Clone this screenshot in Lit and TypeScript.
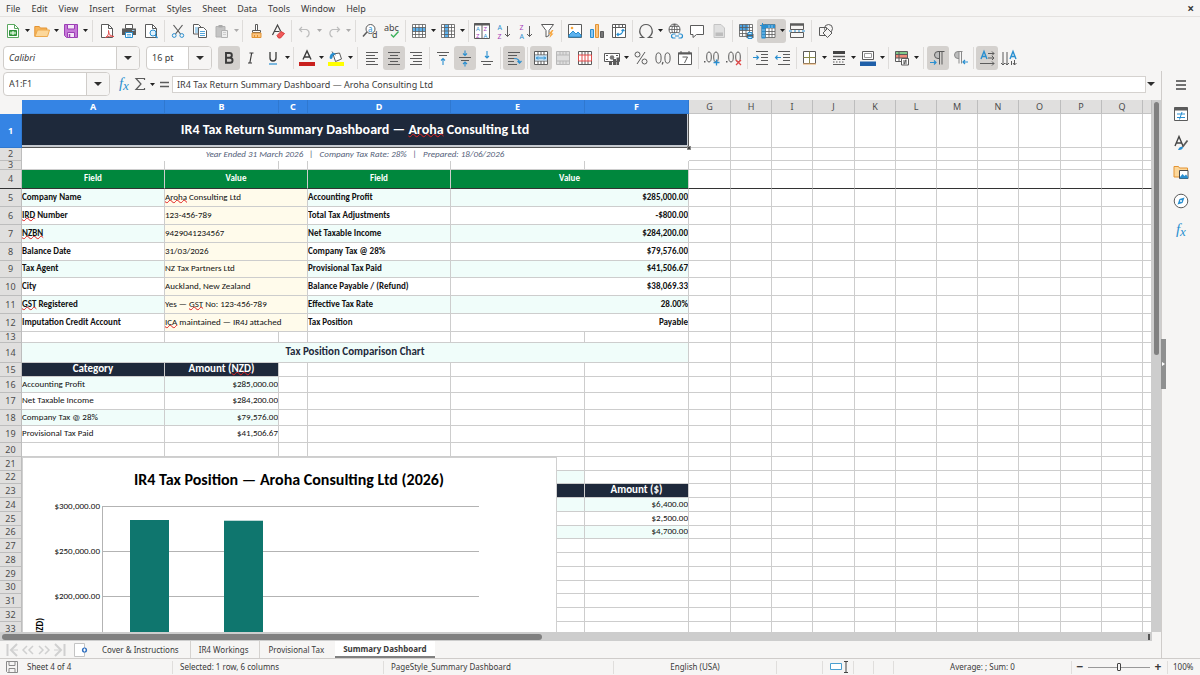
import { LitElement, html, css, svg, nothing, SVGTemplateResult } from "lit";
import { customElement, property } from "lit/decorators.js";
import { classMap } from "lit/directives/class-map.js";

const G = "#5b5b5b";
const B = "#2a8fd0";
const line = (d: string, c = G, w = 1) => svg`<path d=${d} fill="none" stroke=${c} stroke-width=${w} />`;
const fill = (d: string, c: string, s = "none") => svg`<path d=${d} fill=${c} stroke=${s} />`;
const glyph = (t: string, x: number, y: number, size: number, c = G, style = "") =>
  svg`<text x=${x} y=${y} font-size=${size} fill=${c} class=${"g " + style}>${t}</text>`;

const ICONS: Record<string, SVGTemplateResult[]> = {
  new: [fill("M2.5 1.5h7l4 4v9h-11z", "#fff", "#5aa860"), line("M9.5 1.5v4h4", "#5aa860"), fill("M4.5 7.5h7v5h-7z", "#4caf50", "#2e8b3a"), line("M5 10h6M8 8v4", "#fff")],
  open: [fill("M.8 13.5v-10h4.5l1 1.5h6.500v2", "#f7b55a", "#e39332"), fill("M1 13.500l2.500-6.500h12l-2 6.500z", "#fcd79a", "#eda94c")],
  save: [fill("M1.500 1.500h13v13h-11l-2-2z", "#c678d8", "#9c3fb5"), fill("M4.500 1.500h7v4.500h-7z", "#f4e6f8", "#9c3fb5"), fill("M4.500 9.500h7v5h-7z", "#f4e6f8", "#9c3fb5"), line("M6.500 11v3", "#9c3fb5", 1.500)],
  pdf: [fill("M2.500 1.500h7l4 4v9h-11z", "#fff", G), line("M9.500 1.500v4h4"), line("M6.500 14.500c3-2 3.500-4.500 3-7c0 4 2.500 6 5.500 6c-3-.8-6-.3-8.500 1z", "#e04a4a", 1)],
  print: [fill("M4.500 1.500h7v4h-7z", "#fff", G), fill("M1 5.500h14v6.500h-14z", "#5b5b5b"), line("M11 7.500h2.500", "#8fd0ff"), fill("M4.500 9.500h7v5h-7z", "#fff", B), line("M6 11.500h4M6 13h4", B, .7)],
  preview: [fill("M2.500 1.500h7l4 4v9h-11z", "#fff", G), line("M9.500 1.500v4h4"), svg`<circle cx="10" cy="10" r="3" fill="#dff1fd" stroke="#2a8fd0" />`, line("M12 12l2.500 3", B, 1.300)],
  cut: [line("M3.500 2L10.500 11M12.500 2L5.500 11", G, 1.200), svg`<circle cx="4.200" cy="12.500" r="1.900" fill="none" stroke="#2a8fd0" /><circle cx="11.800" cy="12.500" r="1.900" fill="none" stroke="#2a8fd0" />`],
  copy: [fill("M1.500 1.500h5l2.500 2.500v7h-7.500z", "#fff", G), line("M3 5h3M3 7h3M3 9h3", B, .8), fill("M6.500 4.500h5l3 3v7h-8z", "#fff", G), line("M8 8.500h5M8 10.500h5M8 12.500h5", B, .8)],
  paste: [fill("M2 3.500h9v10.500h-9z", "#c4c4c4", "#b2b2b2"), fill("M4.500 2h4v2.500h-4z", "#aaa"), fill("M7.500 7.500h6v7h-6z", "#eee", "#b2b2b2"), line("M9 9.500h3M9 11.500h3", "#c4c4c4", .8)],
  brush: [fill("M7.500 1.500h2v6h-2z", "#fff", G), fill("M4.500 7.500h8v2h-8z", "#fff", G), fill("M4 10h9v4.500h-9z", "#fbc582", "#e39332"), line("M6.500 14v-2M9.500 14v-2", "#e39332")],
  clear: [line("M2.500 12L7.500 2L10.800 8.500M4.500 8.500h5", "#444", 1.200), fill("M7 12.500l4-4 3.500 2-4 4.500h-2z", "#f05a5a", "#d83a3a")],
  undo: [line("M5 4L2.500 6.500L5 9M2.500 6.500h7a4 4 0 0 1 0 7.500", "#bdbdbd", 1.200)],
  redo: [line("M11 4l2.500 2.500L11 9M13.500 6.500h-7a4 4 0 0 0 0 7.500", "#bdbdbd", 1.200)],
  find: [svg`<circle cx="8.500" cy="6" r="4.500" fill="#fff" stroke="#5b5b5b" />`, line("M5 9L1 13.500", G, 1.500), glyph("a", 6, 8.500, 8, B), glyph("d", 10, 15, 9, "#444")],
  spell: [glyph("abc", 0, 8, 9, "#444"), line("M7 11.500l2.500 2.500 5-5.500", "#3cb15c", 1.400)],
  row: [fill("M1.500 1.500h13v13h-13z", "#fff"), fill("M1.500 4.500h13v4h-13z", "#5db2ee"), line("M1.500 1.500h13v13h-13zM1.500 4.500h13M1.500 8.500h13M1.500 11.500h13M4.500 1.500v13M8 1.500v13M11.500 1.500v13", G, .8)],
  col: [fill("M1.500 1.500h13v13h-13z", "#fff"), fill("M4.500 1.500h4v13h-4z", "#5db2ee"), line("M1.500 1.500h13v13h-13zM1.500 4.500h13M1.500 8h13M1.500 11.500h13M4.500 1.500v13M8.500 1.500v13M11.500 1.500v13", G, .8)],
  sort: [fill("M.5 .5h15v15h-15z", "#fff", G), line("M0 1.500h16", G, 2), line("M8 1v14"), glyph("A", 2, 8, 6, B), glyph("Z", 2, 15, 6, "#a640b8"), glyph("Z", 9.500, 8, 6, "#a640b8"), glyph("A", 9.500, 15, 6, B)],
  az: [glyph("A", 1.500, 6.500, 7, B), glyph("Z", 1.500, 15.500, 7, "#a640b8"), line("M11.500 3v10.500M9 11l2.500 2.500L14 11")],
  za: [glyph("Z", 1.500, 6.500, 7, "#a640b8"), glyph("A", 1.500, 15.500, 7, B), line("M11.500 3v10.500M9 11l2.500 2.500L14 11")],
  filter: [fill("M1.500 1.500h12l-4.500 6v5l-3 1.500v-6.500z", "#fff", G), fill("M12 7l-3.500 4h2l-1 4 4-4.500h-2l2-3.500z", "#f7a53c")],
  image: [fill("M1.500 1.500h13v13h-13z", "#fff", G), fill("M2 12l4-4 3 3 2-2 3 3v2h-12z", "#5db2ee", B), svg`<circle cx="5" cy="5" r="1.300" fill="#f7a53c" />`],
  chart: [fill("M1.500 6.500h3v8h-3z", "#8ac7f2", B), fill("M6.500 1.500h3v13h-3z", "#fbc582", "#e39332"), fill("M11.500 8.500h3v6h-3z", "#777", G)],
  pivot: [fill("M1.500 1.500h13v13h-13z", "#fff", G), line("M1.500 4.500h13M4.500 1.500v13M8 1.500v3M11.500 1.500v3"), line("M6 11.500c4 .5 6-1.500 6-5M10.500 8l1.500-1.500L13.500 8M7.500 10L6 11.500 7.500 13", B, 1.200)],
  omega: [line("M1.500 14.500h4c-7-5-3-13 2.500-13s9.500 8 2.500 13h4", G, 1.200)],
  link: [svg`<circle cx="7.500" cy="6.500" r="5.500" fill="#fff" stroke="#5b5b5b" />`, line("M2 6.500h11M3 3.500h9M3.500 9.500h8M7.500 1v11M7.500 1c-3.500 3-3.500 8 0 11c3.500-3 3.500-8 0-11", G, .8), fill("M4 10h12v6h-12z", "#f6f5f4"), line("M8.500 11h-2a1.900 1.900 0 0 0 0 4h2M11.500 11h2a1.900 1.900 0 0 1 0 4h-2M8 13h4", B, 1.200)],
  comment: [fill("M1.500 2.500h13v9h-7l-3.500 3v-3h-2.500z", "#fff", G)],
  header: [fill("M3 1.500h7l3.500 3.500v9.500h-10.500z", "#e0e0e0", "#c4c4c4"), fill("M4.500 9.500h7.500v3.500h-7.500z", "#bdbdbd")],
  area: [fill("M1.500 1.500h13v10h-13z", "#fff"), fill("M1.500 1.500h9v6h-9z", "#4ba3e3"), line("M1.500 1.500h13v12h-13zM1.500 4.500h13M1.500 7.500h13M1.500 10.500h13M4.500 1.500v12M8 1.500v12M11.500 1.500v12", G, .8), fill("M8.500 11h7v4h-7z", G), fill("M10 9.500h4v2h-4zM10 13.500h4v2h-4z", "#cfe8fa", B)],
  freeze: [fill("M2 1h13v13.500h-13z", "#fff"), line("M2 1.500h13v13h-13zM2 5h13M2 8.500h13M2 11.500h13M5.500 1.500v13M9 1.500v13M12 1.500v13", G, .8), fill("M1.500 3h4v12.500h-4zM4 1.500h11v3.500h-11z", "#2a8fd0"), line("M2 7h3M2 10h3M2 13h3M9 2v3M12 2v3", "#a8d6f5", .8), line("M2.500 0v5M0 2.500h5", B, 1)],
  split: [line("M1.500 1.500v5h13v-5M1.500 14.500v-5h13v5z"), fill("M2 7h12v2h-12z", "#f6f5f4"), line("M1 1.500h14", G, 2.500), line("M0 8h3M5 8h2M9 8h2M13 8h3", B, 1)],
  shapes: [fill("M1.500 4.500h7v8h-7z", "#f6f5f4", G), svg`<circle cx="10.500" cy="5.500" r="4" fill="none" stroke="#5b5b5b" />`, fill("M9.500 5.500l4.500 4.500-4.500 4.500-4.500-4.500z", "#f6f5f4", G)],
  bold: [line("M5 3h3.500a2.300 2.300 0 0 1 0 4.700H5zM5 7.700h4a2.500 2.500 0 0 1 0 5.100H5z", "#3a3a3a", 1.900)],
  italic: [line("M6.500 3h4M5 13h4M8.700 3L6.800 13", "#3a3a3a", 1.200)],
  underline: [line("M5 2v6a3 3 0 0 0 6 0V2", "#3a3a3a", 1.300), line("M4 14h8", B, 1.200)],
  fontcolor: [line("M4 9.500L8 1L12 9.500M5.500 7h5", "#3a3a3a", 1.400), fill("M0 12h16v4H0z", "#c9211e")],
  highlight: [fill("M5 4l6.500-1 2 6-6 2.500z", "#fff", G), line("M4 1.500c1 2 2 3 3.500 3.500", G), fill("M2.500 4.500c-1.500 3-1 4.500 .5 4.500s1.500-1.500 2-3.500l3-1.500-3-1.500z", B), fill("M0 12h16v4H0z", "#ffff00")],
  left: [line("M2 2.500h12M2 5.500h9M2 8.500h12M2 11.500h9M2 14.500h12")],
  center: [line("M2 2.500h12M4 5.500h8M2 8.500h12M4 11.500h8M2 14.500h12")],
  right: [line("M2 2.500h12M5 5.500h9M2 8.500h12M5 11.500h9M2 14.500h12")],
  top: [line("M2 2.500h12M4 5.500h8"), line("M8 15V8.500M6 10.500l2-2 2 2", B, 1.100)],
  middle: [line("M2 7.500h12M4 10.500h8"), line("M8 0.500V5.500M6 3.500l2 2 2-2M8 16.500V12.500M6 14l2-2 2 2", B, 1.100)],
  bottom: [line("M2 11.500h12M4 14.500h8"), line("M8 1v7M6 6l2 2 2-2", B, 1.100)],
  wrap: [line("M2 2.500h12M2 5.500h9M2 8.500h6M2 11.500h6M2 14.500h9"), line("M8 8.500c4 0 5.500 1 5.500 4.500M11.500 11l2 2.200 2-2.200", B, 1.200)],
  merge: [fill("M1.500 1.500h13v13h-13z", "#fff"), line("M1.500 1.500h13v13h-13zM1.500 5h13M1.500 11h13M5 1.500V5M8 1.500V5M11 1.500V5M5 11v3.500M8 11v3.500M11 11v3.500"), fill("M2 5.500h12v5h-12z", "#bfe0f8"), line("M3 8h10M5 6.500L3.500 8 5 9.500M11 6.500L12.500 8 11 9.500", B)],
  unmerge: [fill("M1.500 1.500h13v13h-13z", "#dedede"), line("M1.500 1.500h13v13h-13zM1.500 5h13M1.500 11h13M5 1.500V5M8 1.500V5M11 1.500V5M5 11v3.500M8 11v3.500M11 11v3.500", "#b8b8b8")],
  splitcell: [fill("M1.500 1.500h13v13h-13z", "#fff"), line("M1.500 1.500h13v13h-13zM5 1.500V5M8 1.500V5M11 1.500V5M5 11v3.500M8 11v3.500M11 11v3.500"), line("M1.500 5h13v6h-13zM5 5v6M8 5v6M11 5v6", "#e04a4a", 1)],
  currency: [fill("M.5 3.500h15v8h-15z", "#fff", G), svg`<circle cx="8" cy="7.500" r="2.300" fill="#777" />`, line("M2 5.500h2M12 5.500h2M2 9.500h2", G), fill("M5 11h3v4h-3zM9 9h3v6h-3zM12.500 7.500h2.500v7.500h-2.500z", "#5b5b5b")],
  percent: [svg`<circle cx="4.500" cy="4.500" r="2.500" fill="none" stroke="#5b5b5b" /><circle cx="11.500" cy="11.500" r="2.500" fill="none" stroke="#5b5b5b" />`, line("M12 2L4 14")],
  number: [svg`<ellipse cx="3.500" cy="8" rx="2.600" ry="5.200" fill="none" stroke="#5b5b5b" /><ellipse cx="12.500" cy="8" rx="2.600" ry="5.200" fill="none" stroke="#5b5b5b" />`, line("M8 12l-.8 2.500", G, 1.300)],
  date: [fill("M1.500 3h13v11.500h-13z", "#fff", G), line("M1 3.500h14", G, 2), line("M4 1v3M12 1v3M5.500 7h5l-3 6")],
  adddec: [svg`<ellipse cx="5" cy="7" rx="2.300" ry="5" fill="none" stroke="#5b5b5b" /><ellipse cx="12" cy="7" rx="2.300" ry="5" fill="none" stroke="#5b5b5b" />`, fill("M0 11h1.500v1.500H0z", G), line("M12.500 9.500v6M9.500 12.500h6", B, 1.300)],
  deldec: [svg`<ellipse cx="5" cy="7" rx="2.300" ry="5" fill="none" stroke="#5b5b5b" /><ellipse cx="12" cy="7" rx="2.300" ry="5" fill="none" stroke="#5b5b5b" />`, fill("M0 11h1.500v1.500H0z", G), line("M10 10l5 5M15 10l-5 5", "#e04a4a", 1.300)],
  indent: [line("M3 1.500h12M8 4.500h7M8 7.500h7M8 10.500h7M3 14.500h12"), line("M0 7.500h5.500M3.500 5.500l2 2-2 2", B, 1.100)],
  outdent: [line("M3 1.500h12M8 4.500h7M8 7.500h7M8 10.500h7M3 14.500h12"), line("M.5 7.500H6M2.500 5.500l-2 2 2 2", B, 1.100)],
  borders: [fill("M1.500 1.500h12v12h-12z", "#fff", G), line("M7.500 1.500v12M1.500 7.500h12", "#8a8a4a"), line("M1 14h13", "#e8a860")],
  style: [fill("M2 1h12v3h-12z", "#444"), line("M2 6.500h12", G, 1.500), line("M2 9.500h3M6.500 9.500h3M11 9.500h3M2 12h1.500M5 12h1.500M8 12h1.500M11 12h1.500M2 14.500h12")],
  bcolor: [fill("M2.500 1.500h11v8h-11z", "#fff", G), line("M4.500 3.500h7v4h-7z", "#999"), fill("M0 11.500h16v4.500H0z", "#1f5fa8")],
  cond: [fill("M1.500 1.500h12v10h-12z", "#fff"), fill("M1.500 1.500h12v3h-12z", "#7fc98a"), fill("M1.500 4.500h12v3.500h-12z", "#f08a7a"), line("M1.500 1.500h12v10h-12zM1.500 4.500h12M1.500 8h12M5 1.500v10"), fill("M7.500 8.500h7v6.500h-7z", "#fff", G), line("M9 11h4M9 13h4M12 9.500l-2 5")],
  ltr: [fill("M9.500 1.500H8a3.500 3.500 0 0 0 0 7h1.500z", "#bdbdbd"), line("M14.500 1.500H8a3.500 3.500 0 0 0 0 7h1M9.500 1.500v13M12 1.500v13", G, 1), line("M0 12.500h6M4 10.500l2 2-2 2", B, 1.200)],
  rtl: [fill("M7 1.500H6a3.500 3.500 0 0 0 0 7h1z", "#bdbdbd"), line("M10.500 1.500H6a3.500 3.500 0 0 0 0 7h1M7 1.500v12M9.500 1.500v12", "#8a8a8a", 1), line("M16 12h-5M13 10l-2 2 2 2", B, 1.200)],
  horiz: [line("M2 9L5 1.500L8 9M3 6.500h4", B, 1.400), line("M9 3.500h6M13 1.500l2 2-2 2M9 8h6M13 6l2 2-2 2M1 13.500h14M13 11.500l2 2-2 2")],
  vert: [line("M9 9l3-7.500L15 9M10 6.500h4", B, 1.400), line("M2 2v13M0 13l2 2 2-2M6 2v13M4.500 13l1.500 2 2-2M10.500 11v4M13.500 10v5M12 13l1.500 2 2-2")],
  fx: [glyph("f", 3, 12, 15, B, "serif"), glyph("x", 7, 14, 13, B, "serif")],
  sigma: [line("M12.500 4V2.500H4L9 8L4 13.500h8.500V12", G, 1.200)],
  equals: [line("M4 6.500h9M4 10.500h9", G, 1.500)],
  menu: [line("M3 4h10M3 8h10M3 12h10", "#444", 1.600)],
  props: [fill("M1.500 1.500h13v13h-13z", "#fff", G), line("M1.500 3h13", G, 3), line("M4 8h8M4 11.500h8M9 6l-2.500 7.500", B)],
  styles: [line("M2 11L6 1.500L10 11M3.500 8h5", "#444", 1.400), line("M14.500 5.500L9.500 12", G, 1.800), fill("M5 15c1-3 3-4 5-3c0 2-2 3.500-5 3z", B)],
  gallery: [fill("M1 13V2.500h4.500l1 1.500h8v9z", "#fcd79a", "#e39332"), fill("M6.500 6.500h8.500v8h-8.500z", "#fff", "#4a4a4a"), fill("M7 13l2.500-3 2 2 1.500-1.500 2 2.500v1.500H7z", B)],
  nav: [svg`<circle cx="8" cy="8" r="6.800" fill="#fff" stroke="#5b5b5b" />`, fill("M11.500 4.500l-2 5.500-5 1.500 2-5.500z", B), svg`<circle cx="8" cy="8" r="1" fill="#fff" />`],
  disk: [line("M2.500 2.500h11v11h-10l-1-1zM5 2.500v4h6v-4M5 13.500v-4h6v4", "#8a8a8a")],
  addsheet: [fill("M.5 1.500h10v13h-10z", "#fff", "#c4c4c4"), svg`<circle cx="10.500" cy="8" r="2.600" fill="#2f6fc0" />`, line("M10.500 6.500v3M9 8h3", "#fff")],
  first: [line("M3.500 2v12M13 2L7 8l6 6", "#d0d0d0", 2), line("M7 8h7", "#d0d0d0", 1)],
  prev: [line("M7 4L3 8l4 4M13 4L9 8l4 4", "#d0d0d0", 1.500)],
  next: [line("M3 4l4 4-4 4M9 4l4 4-4 4", "#d0d0d0", 1.500)],
  last: [line("M12.500 2v12M3 2l6 6-6 6", "#d0d0d0", 2), line("M2 8h7", "#d0d0d0", 1)],
};

const base = css`
  :host { box-sizing: border-box; font-family: "Noto Sans", sans-serif; color: #3a3a3a; }
  *, *::before, *::after { box-sizing: border-box; }
  button, input { font: inherit; color: inherit; margin: 0; padding: 0; border: 0; background: none; min-width: 0; }
  svg { display: block; overflow: visible; }
  .g { font-family: "Noto Sans", sans-serif; }
  .serif { font-family: "Liberation Serif", serif; font-style: italic; }
`;

const icon = (name: string) => html`<svg width="16" height="16" viewBox="0 0 16 16" aria-hidden="true">${ICONS[name]}</svg>`;
const caret = () => html`<svg width="5" height="3" viewBox="0 0 5 3" aria-hidden="true"><path d="M0 0h5L2.500 3z" fill="#222"/></svg>`;
const bigCaret = () => html`<svg width="8" height="4" viewBox="0 0 8 4" aria-hidden="true"><path d="M0 0h8L4 4z" fill="#2e2e2e"/></svg>`;

/* Items: "name", "name+" for a button with a menu, "|" and "||" for separators, "!" prefix = pressed, "~" prefix = disabled */
@customElement("tool-strip")
class ToolStrip extends LitElement {
  @property() items = "";
  static styles = [base, css`
    :host { display: flex; align-items: center; }
    .tool { width: 22px; height: 24px; display: flex; align-items: center; justify-content: center; border-radius: 3px; }
    .menu { width: 29px; gap: 4px; padding-left: 3px; justify-content: flex-start; }
    .pressed { background: #d4d1ce; }
    .disabled svg:last-child:not(:first-child) { opacity: 0.35; }
    .sep { width: 5px; height: 22px; background: linear-gradient(#dedcda, #dedcda) center / 1px 100% no-repeat; flex: none; }
    .wide { width: 7px; }
  `];
  render() {
    return this.items.split(" ").map((raw) => {
      if (raw[0] === "|") return html`<span class=${classMap({ sep: true, wide: raw === "||" })}></span>`;
      const name = raw.replace(/[!~+]/g, "");
      const menu = raw.endsWith("+");
      const cls = { tool: true, menu, pressed: raw[0] === "!", disabled: raw[0] === "~" };
      return html`<button class=${classMap(cls)} aria-label=${name}>${icon(name)}${menu ? caret() : nothing}</button>`;
    });
  }
}

type Cell = { t?: unknown; span?: number; c?: string };
const COLS: [string, number][] = [
  ["A", 143], ["B", 114], ["C", 29], ["D", 143], ["E", 134], ["F", 104], ["G", 42], ["H", 41], ["I", 41], ["J", 42],
  ["K", 41], ["L", 41], ["M", 41], ["N", 41], ["O", 42], ["P", 41], ["Q", 41],
];
const HEIGHTS = [34, 13, 9, 19, 18, 18, 18, 18, 17, 18, 18, 18, 11, 20, 14, 16, 17, 16, 17, 14, 14, 13, 14, 14, 14, 13, 14, 14, 14, 13, 14, 14, 14];
const w = (t: string) => html`<span class="wavy">${t}</span>`;

const info: [unknown, unknown, string, string][] = [
  ["Company Name", html`${w("Aroha")} Consulting Ltd`, "Accounting Profit", "$285,000.00"],
  [html`${w("IRD")} Number`, "123-456-789", "Total Tax Adjustments", "-$800.00"],
  [w("NZBN"), "9429041234567", "Net Taxable Income", "$284,200.00"],
  ["Balance Date", "31/03/2026", "Company Tax @ 28%", "$79,576.00"],
  ["Tax Agent", "NZ Tax Partners Ltd", "Provisional Tax Paid", "$41,506.67"],
  ["City", "Auckland, New Zealand", "Balance Payable / (Refund)", "$38,069.33"],
  [html`${w("GST")} Registered`, html`Yes — ${w("GST")} No: 123-456-789`, "Effective Tax Rate", "28.00%"],
  ["Imputation Credit Account", html`${w("ICA")} maintained — IR4J attached`, "Tax Position", "Payable"],
];
const positions = [["Accounting Profit", "$285,000.00"], ["Net Taxable Income", "$284,200.00"], ["Company Tax @ 28%", "$79,576.00"], ["Provisional Tax Paid", "$41,506.67"]];

const ROWS: Record<number, Cell[]> = {
  1: [{ t: html`IR4 Tax Return Summary Dashboard — ${w("Aroha")} Consulting Ltd`, span: 6, c: "title" }],
  2: [{ t: html`Year Ended 31 March 2026 &nbsp; | &nbsp; Company Tax Rate: 28% &nbsp; | &nbsp; Prepared: 18/06/2026`, span: 6, c: "sub" }],
  4: [{ t: "Field", c: "green" }, { t: "Value", span: 2, c: "green" }, { t: "Field", c: "green" }, { t: "Value", span: 2, c: "green" }],
  14: [{ t: "Tax Position Comparison Chart", span: 6, c: "section" }],
  15: [{ t: "Category", c: "navy" }, { t: html`Amount (${w("NZD")})`, c: "navy" }],
  22: [{ span: 5, c: "tint" }],
  23: [{ c: "navy", span: 4 }, { c: "navy" }, { t: "Amount ($)", c: "navy" }],
  24: [{ c: "tint", span: 5 }, { t: "$6,400.00", c: "tint num" }],
  25: [{ span: 5 }, { t: "$2,500.00", c: "num" }],
  26: [{ c: "tint", span: 5 }, { t: "$4,700.00", c: "tint num" }],
};
info.forEach(([a, b, c, d], i) => {
  const t = i % 2 ? "" : " tint";
  ROWS[5 + i] = [{ t: a, c: "strong" + t }, { t: b, span: 2, c: "cream" }, { t: c, c: "strong" + t }, { t: d, span: 2, c: "strong num" + t }];
});
positions.forEach(([a, b], i) => {
  const t = i % 2 ? "" : " tint";
  ROWS[16 + i] = [{ t: a, c: t }, { t: b, c: "num" + t }];
});

@customElement("sheet-chart")
class SheetChart extends LitElement {
  static styles = [base, css`
    :host { display: block; background: #fff; border: 1px solid #d0d0d0; font-family: Carlito, Calibri, Lato, sans-serif; }
    .title { font-size: 16px; font-weight: 700; fill: #000; }
    .label { font-size: 9px; fill: #111; }
    .axis { font-size: 9px; font-weight: 700; fill: #000; }
  `];
  render() {
    const y = (v: number) => 48.500 + (300 - v) * 0.9;
    return html`<svg width="100%" height="290" role="img" aria-label="IR4 Tax Position">
      <text class="title" x="266" y="27" text-anchor="middle">IR4 Tax Position — Aroha Consulting Ltd (2026)</text>
      ${[300, 250, 200, 150, 100, 50, 0].map((v) => svg`
        <line x1="79" x2="456" y1=${y(v)} y2=${y(v)} stroke="#b3b3b3" />
        <text class="label" x="77" y=${y(v) + 2} text-anchor="end">$${v ? v + ",000.00" : "0.00"}</text>`)}
      <line x1="79.500" x2="79.500" y1="48" y2=${y(0)} stroke="#b3b3b3" />
      ${[285, 284.2, 79.6, 41.5].map((v, i) => svg`<rect x=${107 + i * 94} y=${y(v)} width="39" height=${v * 0.9} fill="#0f766e" />`)}
      <text class="axis" transform="translate(20 187) rotate(-90)" text-anchor="middle">Amount (NZD)</text>
    </svg>`;
  }
}

@customElement("sheet-grid")
class SheetGrid extends LitElement {
  static styles = [base, css`
    :host { display: block; position: relative; overflow: hidden; background: #fff; font-family: Carlito, Calibri, Lato, sans-serif; color: #111; }
    table { table-layout: fixed; width: 100%; border-collapse: separate; border-spacing: 0; }
    th, td { padding: 0; border: solid #cdcdcd; border-width: 0 1px 1px 0; font-size: 9px; line-height: 10px; white-space: nowrap; overflow: hidden; text-align: left; font-weight: 400; }
    td { padding-bottom: 2px; }
    th { background: #e0dfde; color: #4c4c4c; text-align: center; font-family: "Noto Sans", sans-serif; border-color: #bdbdbd; }
    thead th { height: 14px; border-bottom-color: #c4c4c4; line-height: 12px; }
    tbody th { vertical-align: middle; line-height: 10px; overflow: visible; }
    .low, .low ~ td { line-height: 8px; padding: 0; }
    thead .on, tbody .on { background: #3584e4; color: #fff; font-weight: 700; border-color: #2f78d0; }
    .corner { background: #f6f5f4; border-color: #f6f5f4; }
    .rowhead { width: 22px; }
    .title { background: #1e293b; color: #fff; font-size: 14px; line-height: 18px; font-weight: 700; text-align: center; border-color: #555; box-shadow: inset -1px -2px #c5c9cf; padding-bottom: 1px; }
    .sub { color: #55627a; font-style: italic; line-height: 12px; padding: 0; text-align: center; border-color: #fff; }
    .green { background: #00873d; color: #fff; font-weight: 700; text-align: center; }
    .section { background: #f0fdfa; color: #1e293b; font-size: 11px; line-height: 12px; font-weight: 700; text-align: center; }
    .navy { background: #1e293b; color: #fff; font-size: 11px; line-height: 12px; font-weight: 700; padding: 0; vertical-align: top; text-align: center; }
    .strong { font-weight: 700; }
    .tint { background: #f0fdfa; }
    .cream { background: #fffbeb; }
    .num { text-align: right; }
    .frozen > * { border-bottom-color: #333; }
    .wavy { text-decoration: underline wavy #e02020 1px; text-underline-offset: -1px; text-decoration-skip-ink: none; }
    .handle { position: absolute; left: 687px; top: 46px; width: 4px; height: 4px; background: #444; border: 1px solid #888; }
    .chart { position: absolute; left: 22px; top: 357px; width: 535px; }
  `];
  private row(n: number) {
    const cells = [...(ROWS[n] ?? [])];
    let used = cells.reduce((s, c) => s + (c.span ?? 1), 0);
    for (; used <= COLS.length; used++) cells.push({});
    return html`<tr class=${n === 4 ? "frozen" : ""} style=${`height:${HEIGHTS[n - 1]}px`}>
      <th scope="row" class=${classMap({ on: n === 1, low: n === 3 })}>${n}</th>
      ${cells.map((c) => html`<td class=${c.c ?? ""} colspan=${c.span ?? 1}>${c.t ?? ""}</td>`)}
    </tr>`;
  }
  render() {
    return html`<table>
      <colgroup><col class="rowhead" />${COLS.map(([, px]) => html`<col style=${`width:${px}px`} />`)}<col /></colgroup>
      <thead><tr><th class="corner"></th>${COLS.map(([l], i) => html`<th scope="col" class=${i < 6 ? "on" : ""}>${l}</th>`)}<th></th></tr></thead>
      <tbody>${HEIGHTS.map((_, i) => this.row(i + 1))}</tbody>
    </table>
    <span class="handle"></span>
    <sheet-chart class="chart"></sheet-chart>`;
  }
}

@customElement("app-root")
class AppRoot extends LitElement {
  static styles = [base, css`
    :host { display: flex; flex-direction: column; height: 100vh; overflow: hidden; background: #f6f5f4; font-size: 9px; line-height: 12px; }
    .menubar { display: flex; align-items: center; height: 17px; padding: 1px 6px 0; gap: 11px; border-bottom: 1px solid #e4e2e0; }
    .close { margin-left: auto; font-size: 12px; font-weight: 700; }
    .tools { height: 27px; padding-left: 2px; flex: none; }
    .format { display: flex; align-items: center; height: 27px; padding-left: 3px; gap: 6px; flex: none; }
    .combo { display: flex; align-items: stretch; height: 24px; border: 1px solid #d0cdca; border-radius: 4px; background: #fff; overflow: hidden; }
    .combo input { flex: 1; padding-left: 5px; }
    .combo button { width: 23px; display: grid; place-items: center; background: #f6f5f4; border-left: 1px solid #d0cdca; }
    .fontname { width: 137px; font-style: italic; }
    .fontsize { width: 66px; }
    .work { flex: 1; display: flex; min-height: 0; border-bottom: 1px solid #cfccca; }
    .main { flex: 1; display: flex; flex-direction: column; min-width: 0; }
    .formula { display: flex; align-items: center; height: 29px; padding: 0 6px 3px 3px; flex: none; }
    .namebox { width: 107px; margin-right: 6px; }
    .formula .ib { width: 16px; display: grid; place-items: center; }
    .formula .car { width: 8px; display: grid; place-items: center; }
    .formula .line { flex: 1; height: 17px; margin-right: 1px; padding: 0 4px; background: #fff; border: 1px solid #d5d2cf; }
    .view { flex: 1; display: grid; grid-template: minmax(0, 1fr) 9px / minmax(0, 1fr) 9px; min-height: 0; }
    .vbar, .hbar { background: #cdcdcd; padding: 2px; }
    .hbar { display: flex; justify-content: space-between; }
    .mark { width: 2px; height: 6px; background: #555; }
    .thumb { background: #808080; border-radius: 3px; }
    .vbar .thumb { height: 48%; }
    .hbar .thumb { width: 47%; height: 6px; }
    .tabs { display: flex; align-items: center; height: 17px; padding-left: 4px; font-size: 8px; flex: none; }
    .tabs .nb { width: 16px; display: grid; place-items: center; }
    .tabs .add { width: 24px; margin-left: 2px; display: grid; place-items: center; }
    .tab { height: 17px; padding: 0 8px; }
    .tab + .tab { margin-left: 3px; border-left: 1px solid #d5d2cf; }
    .tab + .tab.active { background: #fff; font-weight: 700; border-left: 0; border-bottom: 2px solid #808080; }
    .side { width: 39px; border-left: 1px solid #cfccca; display: flex; align-items: center; gap: 13px; padding-top: 6px; flex-direction: column; position: relative; }
    .grip { position: absolute; left: -1px; top: 268px; width: 5px; height: 50px; background: #8f9090; display: grid; place-items: center; }
    .status { display: grid; grid-template-columns: 173fr 211fr 230fr 163fr 46fr 31fr 20fr 20fr 178fr 96fr 32fr; height: 16px; font-size: 8px; align-items: center; flex: none; }
    .status > * { height: 13px; min-width: 0; border-right: 1px solid #e0dedc; padding-left: 7px; white-space: nowrap; display: flex; align-items: center; }
    .status > :last-child { border: 0; padding-left: 5px; }
    .status .mid { justify-content: center; padding: 0; }
    .status .first { gap: 7px; padding-left: 4px; }
    .status .zoom { gap: 4px; padding-left: 4px; }
    .zoom b { width: 8px; font-size: 12px; text-align: center; }
    .range { appearance: none; width: 62px; height: 9px; background: linear-gradient(#999, #999) center / 100% 1px no-repeat; }
    .range::-webkit-slider-thumb { appearance: none; width: 4px; height: 8px; background: #f6f5f4; border: 1px solid #444; border-radius: 1px; }
  `];
  render() {
    return html`
      <nav class="menubar">
        ${["File", "Edit", "View", "Insert", "Format", "Styles", "Sheet", "Data", "Tools", "Window", "Help"].map((m) => html`<button>${m}</button>`)}
        <button class="close" aria-label="Close">×</button>
      </nav>
      <tool-strip class="tools" items="new+ open+ save+ || pdf print preview | cut copy ~paste+ | brush clear | ~undo+ ~redo+ || find spell | row+ col+ | sort az za filter | image chart pivot | omega+ link comment header | area !freeze+ split || shapes"></tool-strip>
      <div class="format">
        <div class="combo fontname"><input aria-label="Font name" value="Calibri" /><button aria-label="Font list">${bigCaret()}</button></div>
        <div class="combo fontsize"><input aria-label="Font size" value="16 pt" /><button aria-label="Size list">${bigCaret()}</button></div>
        <tool-strip items="!bold italic underline+ | fontcolor+ highlight+ || left !center right | top !middle bottom | !wrap | !merge unmerge splitcell | currency+ percent number date | adddec deldec | indent outdent | borders+ style+ bcolor+ | cond+ || !ltr rtl | !horiz vert"></tool-strip>
      </div>
      <div class="work">
        <div class="main">
          <div class="formula">
            <div class="combo namebox"><input aria-label="Name box" value="A1:F1" /><button aria-label="Ranges">${bigCaret()}</button></div>
            <button class="ib" aria-label="Function wizard">${icon("fx")}</button>
            <button class="ib" aria-label="Sum">${icon("sigma")}</button>
            <button class="car" aria-label="Sum menu">${caret()}</button>
            <button class="ib" aria-label="Formula">${icon("equals")}</button>
            <input class="line" aria-label="Input line" value="IR4 Tax Return Summary Dashboard — Aroha Consulting Ltd" />
            <button class="car" aria-label="Expand">${bigCaret()}</button>
          </div>
          <div class="view">
            <sheet-grid></sheet-grid>
            <div class="vbar"><div class="thumb"></div></div>
            <div class="hbar"><div class="thumb"></div><span class="mark"></span></div>
          </div>
          <div class="tabs">
            ${["first", "prev", "next", "last"].map((n) => html`<button class="nb" aria-label=${n}>${icon(n)}</button>`)}
            <button class="add" aria-label="Add sheet">${icon("addsheet")}</button>
            ${["Cover & Instructions", "IR4 Workings", "Provisional Tax", "Summary Dashboard"].map((t, i) => html`<button class=${classMap({ tab: true, active: i === 3 })}>${t}</button>`)}
          </div>
        </div>
        <div class="side">
          ${["menu", "props", "styles", "gallery", "nav", "fx"].map((n) => html`<button aria-label=${n}>${icon(n)}</button>`)}
          <span class="grip"><svg width="3" height="4" viewBox="0 0 3 4"><path d="M0 0l3 2-3 2z" fill="#fff" /></svg></span>
        </div>
      </div>
      <div class="status">
        <span class="first">${icon("disk")}Sheet 4 of 4</span>
        <span>Selected: 1 row, 6 columns</span>
        <span>PageStyle_Summary Dashboard</span>
        <span class="mid">English (USA)</span>
        <span></span>
        <span><svg width="20" height="12" viewBox="0 0 20 12"><path d="M.5 2.500h11v6h-11z" fill="#fff" stroke="#4a9fd0"/><path d="M14 .5h4M14 11.500h4M16 .5v11" stroke="#444" fill="none"/></svg></span>
        <span></span><span></span>
        <span class="mid">Average: ; Sum: 0</span>
        <span class="zoom"><b>−</b><input class="range" type="range" aria-label="Zoom" /><b>+</b></span>
        <span>100%</span>
      </div>`;
  }
}
